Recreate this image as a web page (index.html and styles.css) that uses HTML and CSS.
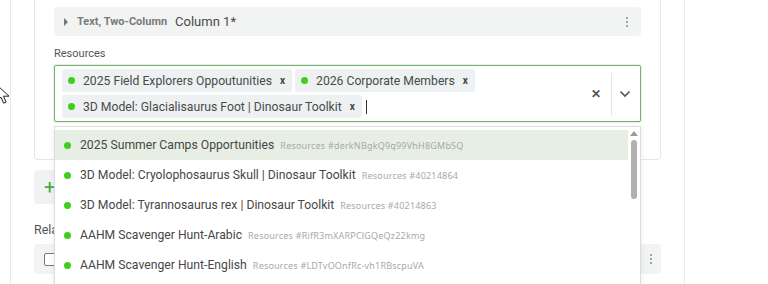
FILE: index.html
```html
<!DOCTYPE html>
<html>
<head>
  <meta charset="utf-8">
  <title>Resources</title>
  <link rel="stylesheet" href="styles.css">
</head>
<body>
<div class="page">
  <div class="side"></div>
  <div class="main">
    <div class="column-box">
      <div class="row-head">
        <span class="caret"></span>
        <span class="row-type">Text, Two-Column</span>
        <span class="row-name">Column 1*</span>
        <span class="kebab"><i></i><i></i><i></i></span>
      </div>

      <div class="field-label">Resources</div>
      <div class="field">
        <div class="select">
          <div class="chips">
            <span class="chip"><b class="dot"></b>2025 Field Explorers Oppoutunities<span class="chip-x">x</span></span>
            <span class="chip"><b class="dot"></b>2026 Corporate Members<span class="chip-x">x</span></span>
            <span class="chip"><b class="dot"></b>3D Model: Glacialisaurus Foot | Dinosaur Toolkit<span class="chip-x">x</span></span>
            <span class="caret-line"></span>
          </div>
          <div class="select-tools">
            <span class="clear">&#x2715;</span>
            <span class="divider"></span>
            <svg class="chev" width="12" height="8" viewBox="0 0 12 8"><path d="M1.5 1.5 6 6l4.5-4.5" fill="none" stroke="#555" stroke-width="1.6"/></svg>
          </div>
        </div>
        <div class="hint">Start typing to search for resources to connect</div>

        <div class="menu">
          <div class="options">
            <div class="opt active"><b class="dot"></b>2025 Summer Camps Opportunities<span class="meta">Resources #derkNBgkQ9q99VhH8GMbSQ</span></div>
            <div class="opt"><b class="dot"></b>3D Model: Cryolophosaurus Skull | Dinosaur Toolkit<span class="meta">Resources #40214864</span></div>
            <div class="opt"><b class="dot"></b>3D Model: Tyrannosaurus rex | Dinosaur Toolkit<span class="meta">Resources #40214863</span></div>
            <div class="opt"><b class="dot"></b>AAHM Scavenger Hunt-Arabic<span class="meta">Resources #RifR3mXARPClGQeQz22kmg</span></div>
            <div class="opt"><b class="dot"></b>AAHM Scavenger Hunt-English<span class="meta">Resources #LDTvOOnfRc-vh1RBscpuVA</span></div>
          </div>
          <div class="scrollbar">
            <span class="arrow-up"></span>
            <span class="thumb"></span>
          </div>
        </div>
      </div>
    </div>

    <div class="add-btn">+</div>

    <div class="section-label">Related Resources</div>
    <div class="row-check">
      <span class="checkbox"></span>
      <span class="kebab"><i></i><i></i><i></i></span>
    </div>
  </div>
  <div class="right"></div>

  <svg class="cursor" width="16" height="22" viewBox="0 0 16 22"><path d="M1 1v16l4-3.8 2.6 6 2.5-1.1-2.6-5.9H13z" fill="#fff" stroke="#222" stroke-width="1"/></svg>
</div>
</body>
</html>
```

FILE: styles.css
```css
body { margin: 0; background: #fff; font-family: Roboto, "Noto Sans", sans-serif; color: #474747; }

.page { position: relative; display: flex; width: 768px; height: 284px; overflow: hidden; }

.side { width: 10px; border-right: 1px solid #e9e9e9; flex: none; }

.main {
  width: 627px;
  padding: 0 23px 0 23px;
  border-right: 1px solid #ececec;
  flex: none;
}

.right { flex: 1; }

.column-box {
  margin-top: -10px;
  padding: 17px 19px 0 19px;
  height: 152px;
  border: 1px solid #e7e7e7;
  border-top: none;
  border-radius: 0 0 4px 4px;
}

.row-head {
  display: flex;
  align-items: center;
  height: 29px;
  padding: 0 10px;
  background: #f2f3f3;
  border-radius: 4px;
}
.caret {
  width: 0; height: 0;
  border-left: 4px solid #777;
  border-top: 4px solid transparent;
  border-bottom: 4px solid transparent;
  margin-right: 9px;
}
.row-type { font-size: 11px; font-weight: 700; color: #7a7a7a; margin-right: 8px; }
.row-name { font-size: 13px; color: #4a4a4a; flex: 1; }

.kebab { display: flex; flex-direction: column; gap: 2px; padding: 0 3px; }
.kebab i { display: block; width: 2px; height: 2px; background: #888; border-radius: 1px; }

.field-label { font-size: 11px; color: #555; margin: 11px 0 5px; }

.field { position: relative; }

.select {
  display: flex;
  min-height: 54px;
  border: 1px solid #77b172;
  border-radius: 2px;
  box-shadow: 0 0 0 1px #e6f0e4;
}
.chips {
  flex: 1;
  display: flex;
  flex-wrap: wrap;
  align-content: flex-start;
  gap: 3px;
  padding: 3px 7px;
}
.chip {
  display: flex;
  align-items: center;
  height: 23px;
  padding: 0 7px 0 6px;
  background: #eef1f2;
  border-radius: 2px;
  font-size: 12.2px;
  color: #4a4a4a;
  white-space: nowrap;
}
.dot {
  display: inline-block;
  width: 7px; height: 7px;
  border-radius: 50%;
  background: #3fcf1b;
  margin-right: 8px;
  flex: none;
}
.chip-x { font-size: 10px; font-weight: 700; color: #444; margin-left: 8px; }
.caret-line { align-self: flex-start; width: 1px; height: 14px; background: #333; margin: 5px 0 0 1px; }

.select-tools { display: flex; align-items: center; padding-right: 9px; }
.clear { font-size: 12px; font-weight: 700; color: #555; margin-right: 10px; }
.divider { width: 1px; height: 42px; background: #e4e4e4; margin-right: 7px; }

.hint { font-size: 10.5px; color: #666; margin-top: 4px; }

.menu {
  position: absolute;
  left: 0; right: 0;
  top: 61px;
  height: 180px;
  display: flex;
  background: #fff;
  border: 1px solid #dcdcdc;
  box-shadow: 0 2px 6px rgba(0,0,0,0.08);
}
.options { flex: 1; padding-top: 3px; }
.opt {
  display: flex;
  align-items: center;
  height: 30px;
  padding-left: 9px;
  font-size: 12.2px;
  color: #474747;
  white-space: nowrap;
}
.opt .dot { margin-right: 9px; }
.opt.active { background: #e7efe4; }
.meta { font-family: "Noto Sans", sans-serif; font-size: 9px; color: #a8a8a8; margin-left: 6px; letter-spacing: 0.2px; }

.scrollbar { width: 12px; position: relative; }
.arrow-up {
  position: absolute; left: 2px; top: 4px;
  width: 0; height: 0;
  border-bottom: 5px solid #9a9a9a;
  border-left: 4px solid transparent;
  border-right: 4px solid transparent;
}
.thumb {
  position: absolute; left: 3px; top: 13px;
  width: 6px; height: 59px;
  background: #b0b0b0;
  border-radius: 3px;
}

.add-btn {
  margin-top: 10px;
  width: 60px;
  height: 34px;
  background: #f0f2f3;
  border-radius: 4px;
  color: #49a944;
  font-size: 20px;
  line-height: 34px;
  padding-left: 10px;
  box-sizing: border-box;
}

.section-label { font-size: 12.5px; color: #555; margin: 18px 0 7px; }

.row-check {
  display: flex;
  align-items: center;
  justify-content: space-between;
  height: 30px;
  padding: 0 6px 0 10px;
  background: #f2f3f3;
  border-radius: 4px;
}
.checkbox { width: 11px; height: 11px; border: 1px solid #777; border-radius: 2px; background: #fff; }

.cursor { position: absolute; left: -4px; top: 84px; }
```
